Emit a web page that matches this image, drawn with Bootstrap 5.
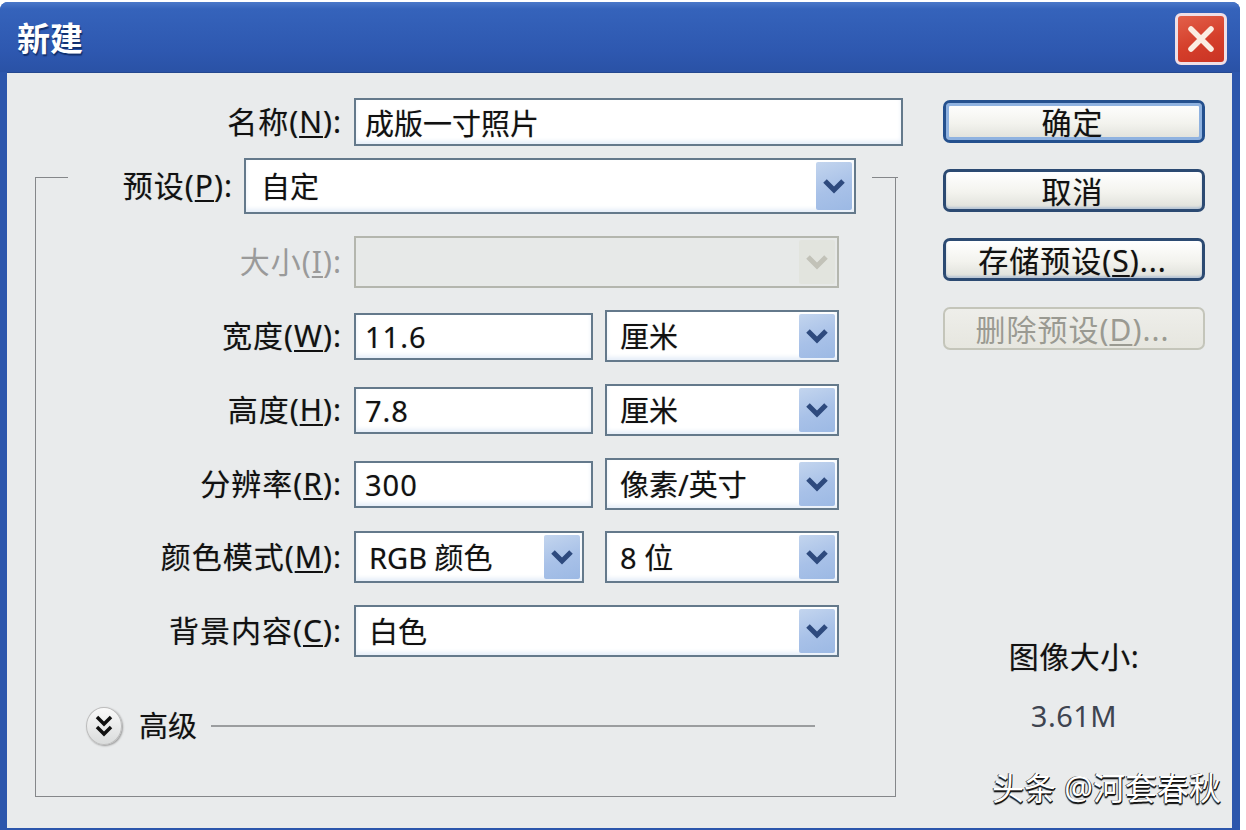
<!DOCTYPE html>
<html lang="zh">
<head>
<meta charset="utf-8">
<title>新建</title>
<link href="https://cdn.jsdelivr.net/npm/bootstrap@5.3.0/dist/css/bootstrap.min.css" rel="stylesheet">
<style>
html,body{margin:0;height:100%;background:#fff;overflow:hidden}
body{font-family:"Noto Sans","Noto Sans CJK SC",sans-serif;font-size:29px;line-height:40px;color:#111}
.dlg{width:1240px;height:828px;margin-top:2px;background:#2c56ac;border-radius:8px 8px 0 0;padding:0 8px 2px 7px;position:relative;box-shadow:0 2px 0 #cfe0ee}
.dlg-title{height:70px;margin:0 -8px 0 -7px;padding:4px 13px 0 17px;border-radius:8px 8px 0 0;background:linear-gradient(180deg,#4a78c9 0,#3563bb 10%,#2e58b0 70%,#2a52a6 100%)}
.dlg-name{font-size:33px;font-weight:700;color:#fff;text-shadow:1px 2px 1px #12306e}
.x-btn{width:52px;height:52px;padding:0;background:linear-gradient(160deg,#e2604a,#d53f2b 55%,#c93324);border:3px solid #efdfe6;border-radius:6px}
.x-btn svg{display:block;margin:auto}
.dlg-body{height:756px;background:#e9ebec;box-shadow:inset 0 1px 0 #24488f}
.col-l{width:889px}
.col-r{width:262px;margin-left:47px;padding-top:28px}
.lb{font-size:30px;letter-spacing:1px;text-align:right;flex:none;white-space:nowrap;text-shadow:0 0 1px rgba(0,0,0,.3)}
.lb u,.act u{text-decoration-thickness:2px;text-underline-offset:3px}
.lb-top{width:335px}
.lb-main{width:306px}
.lb-pre{width:165px}
.row-name{margin-top:26px;height:48px}
.fld{flex:none;background:#fff;border:2px solid #64798b;border-radius:0;color:#111;font-size:29px;line-height:40px;box-shadow:inset 0 -3px 4px #e6eef8;padding:0 9px;text-shadow:0 0 1px rgba(0,0,0,.3)}
.fld:focus{background:#fff;border-color:#64798b;box-shadow:inset 0 -3px 4px #e6eef8}
.num{letter-spacing:1px}
.w-name{width:549px;height:48px}
.w-in{width:239px;height:47px}
.grp{position:relative;margin:31px 0 0 28px;width:861px;border:1px solid #85878a;padding-bottom:51px}
.grp::after{content:"";position:absolute;left:100%;top:-1px;width:3px;height:1px;background:#85878a}
.row-pre{margin:-20px 0 0 32px;width:804px;height:56px;background:#e9ebec}
.pk{flex:none;height:52px;background:#fff;border:2px solid #64798b;padding:2px 2px 2px 13px;box-shadow:inset 0 -3px 4px #e6eef8;text-shadow:0 0 1px rgba(0,0,0,.3)}
.pk-pre{width:612px;height:56px;margin-left:11px;padding-left:15px}
.pk-full{width:485px}
.pk-un{width:234px}
.pk-mode{width:230px}
.pk-txt{flex:1;min-width:0;white-space:nowrap;padding-top:2px}
.pk-btn{flex:none;width:36px;padding:0;border:0;border-radius:2px;background:linear-gradient(160deg,#c3d5ee,#a8c1e8 55%,#9cb9e4)}
.pk-btn svg{display:block;margin:auto}
.pk-dis{background:#e7e9e8;border-color:#b4b6ae;box-shadow:none}
.pk-dis .pk-btn{background:#e2e4de}
.r-gap{margin-top:22px}
.r-gap-s{margin-top:21px}
.fields{margin-left:12px}
.fields-w{margin-left:21px}
.dim,.dim .lb{color:#9a9a9a;text-shadow:none}
.adv{margin:50px 0 0 50px;height:38px}
.adv-btn{width:36px;height:38px;padding:0;border-radius:50%;border:1px solid #bcbcbc;background:linear-gradient(180deg,#fafafa,#dadcdc);box-shadow:1px 1px 2px #9a9a9a}
.adv-btn svg{display:block;margin:auto}
.adv-rule{width:604px;height:0;border-top:2px solid #9b9d9f;margin-left:14px}
.adv-t{margin-left:17px;font-size:29px;text-shadow:0 0 1px rgba(0,0,0,.3)}
.act{height:43px;padding:2px 3px 0 0;border:3px solid #2c4a72;border-radius:7px;background:linear-gradient(180deg,#fff 0,#f3f3ee 55%,#dfe0da 100%);color:#111;font-size:30px;letter-spacing:1px;line-height:36px;white-space:nowrap;box-shadow:inset 0 -2px 2px #b9c6d6;text-shadow:0 0 1px rgba(0,0,0,.3)}
.act+.act{margin-top:26px}
.act-def{border-color:#24508e;box-shadow:inset 0 0 0 3px #8fb2e0}
.act:disabled{opacity:1;color:#9a9a92;border:2px solid #c4c5ba;background:linear-gradient(180deg,#eeeeea,#e6e6df);box-shadow:none;text-shadow:none}
.sz-h{margin-top:287px;font-size:30px;letter-spacing:.5px;text-shadow:0 0 1px rgba(0,0,0,.3)}
.sz-v{margin-top:19px;color:#3e4450;letter-spacing:.5px}
.wm{position:absolute;left:992px;top:766px;font-size:32px;line-height:40px;color:#fff;white-space:nowrap;text-shadow:1px 1px 0 #111,-1px 0 0 #444,0 2px 1px #111}
</style>
</head>
<body>
<div class="dlg">
  <div class="dlg-title d-flex align-items-center justify-content-between">
    <span class="dlg-name">新建</span>
    <button type="button" class="x-btn" aria-label="关闭"><svg width="32" height="32" viewBox="0 0 32 32"><path d="M6 6 26 26M26 6 6 26" stroke="#fbeee2" stroke-width="5.5" stroke-linecap="round"/></svg></button>
  </div>
  <div class="dlg-body d-flex">
    <div class="col-l">
      <div class="row-name d-flex align-items-center">
        <label class="lb lb-top">名称(<u>N</u>):</label>
        <input class="form-control fld w-name fields" value="成版一寸照片">
      </div>
      <div class="grp">
        <div class="row-pre d-flex align-items-center">
          <label class="lb lb-pre">预设(<u>P</u>):</label>
          <div class="pk pk-pre d-flex">
            <span class="pk-txt align-self-center">自定</span>
            <button type="button" class="pk-btn" aria-label="展开"><svg width="24" height="18" viewBox="0 0 24 18"><path d="M3 4 12 13 21 4" fill="none" stroke="#2e4a7e" stroke-width="5"/></svg></button>
          </div>
        </div>
        <div class="d-flex align-items-center r-gap dim">
          <label class="lb lb-main">大小(<u>I</u>):</label>
          <div class="pk pk-full pk-dis d-flex fields">
            <span class="pk-txt"></span>
            <button type="button" class="pk-btn" disabled aria-label="展开"><svg width="24" height="18" viewBox="0 0 24 18"><path d="M3 4 12 13 21 4" fill="none" stroke="#c2c2b8" stroke-width="5"/></svg></button>
          </div>
        </div>
        <div class="d-flex align-items-center r-gap">
          <label class="lb lb-main">宽度(<u>W</u>):</label>
          <input class="form-control fld num w-in fields" value="11.6">
          <div class="pk pk-un d-flex fields">
            <span class="pk-txt align-self-center">厘米</span>
            <button type="button" class="pk-btn" aria-label="展开"><svg width="24" height="18" viewBox="0 0 24 18"><path d="M3 4 12 13 21 4" fill="none" stroke="#2e4a7e" stroke-width="5"/></svg></button>
          </div>
        </div>
        <div class="d-flex align-items-center r-gap">
          <label class="lb lb-main">高度(<u>H</u>):</label>
          <input class="form-control fld num w-in fields" value="7.8">
          <div class="pk pk-un d-flex fields">
            <span class="pk-txt align-self-center">厘米</span>
            <button type="button" class="pk-btn" aria-label="展开"><svg width="24" height="18" viewBox="0 0 24 18"><path d="M3 4 12 13 21 4" fill="none" stroke="#2e4a7e" stroke-width="5"/></svg></button>
          </div>
        </div>
        <div class="d-flex align-items-center r-gap">
          <label class="lb lb-main">分辨率(<u>R</u>):</label>
          <input class="form-control fld num w-in fields" value="300">
          <div class="pk pk-un d-flex fields">
            <span class="pk-txt align-self-center">像素/英寸</span>
            <button type="button" class="pk-btn" aria-label="展开"><svg width="24" height="18" viewBox="0 0 24 18"><path d="M3 4 12 13 21 4" fill="none" stroke="#2e4a7e" stroke-width="5"/></svg></button>
          </div>
        </div>
        <div class="d-flex align-items-center r-gap-s">
          <label class="lb lb-main">颜色模式(<u>M</u>):</label>
          <div class="pk pk-mode d-flex fields">
            <span class="pk-txt align-self-center">RGB 颜色</span>
            <button type="button" class="pk-btn" aria-label="展开"><svg width="24" height="18" viewBox="0 0 24 18"><path d="M3 4 12 13 21 4" fill="none" stroke="#2e4a7e" stroke-width="5"/></svg></button>
          </div>
          <div class="pk pk-un d-flex fields-w">
            <span class="pk-txt align-self-center">8 位</span>
            <button type="button" class="pk-btn" aria-label="展开"><svg width="24" height="18" viewBox="0 0 24 18"><path d="M3 4 12 13 21 4" fill="none" stroke="#2e4a7e" stroke-width="5"/></svg></button>
          </div>
        </div>
        <div class="d-flex align-items-center r-gap">
          <label class="lb lb-main">背景内容(<u>C</u>):</label>
          <div class="pk pk-full d-flex fields">
            <span class="pk-txt align-self-center">白色</span>
            <button type="button" class="pk-btn" aria-label="展开"><svg width="24" height="18" viewBox="0 0 24 18"><path d="M3 4 12 13 21 4" fill="none" stroke="#2e4a7e" stroke-width="5"/></svg></button>
          </div>
        </div>
        <div class="adv d-flex align-items-center">
          <button type="button" class="adv-btn" aria-label="高级"><svg width="20" height="24" viewBox="0 0 20 24"><path d="M3 3 10 10 17 3M3 13 10 20 17 13" fill="none" stroke="#111" stroke-width="3.5"/></svg></button>
          <span class="adv-t">高级</span>
          <span class="adv-rule"></span>
        </div>
      </div>
    </div>
    <div class="col-r d-flex flex-column">
      <button type="button" class="btn act act-def">确定</button>
      <button type="button" class="btn act">取消</button>
      <button type="button" class="btn act">存储预设(<u>S</u>)...</button>
      <button type="button" class="btn act" disabled>删除预设(<u>D</u>)...</button>
      <div class="sz-h text-center">图像大小:</div>
      <div class="sz-v text-center">3.61M</div>
    </div>
  </div>
  <div class="wm">头条 @河套春秋</div>
</div>
</body>
</html>
